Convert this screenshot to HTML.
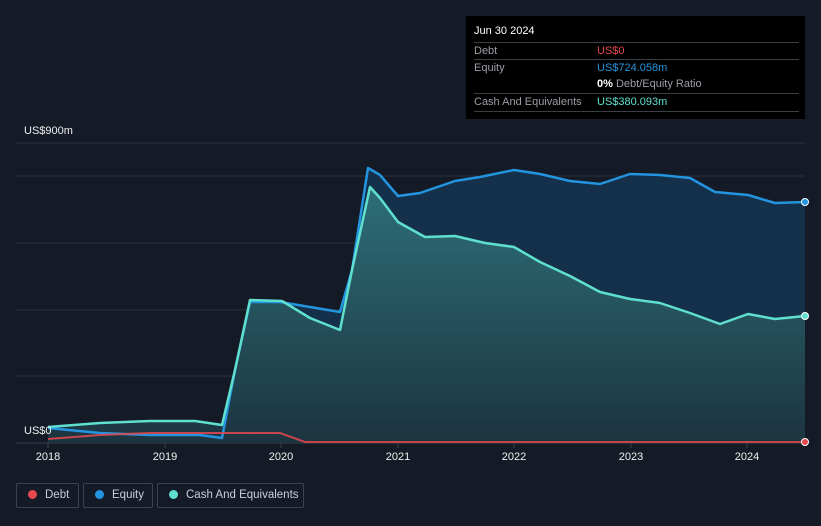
<!DOCTYPE html><html><head><meta charset="utf-8"><style>
body{margin:0;width:821px;height:526px;background:#151b26;font-family:"Liberation Sans",sans-serif;position:relative;overflow:hidden;color:#fff}
.tt{position:absolute;left:466px;top:16px;width:339px;height:103px;background:#000;font-size:11px}
.tt .r{position:absolute;left:8px;right:6px;border-top:1px solid #3a3e45;height:17px;line-height:17px;color:#9a9ea5}
.tt .v{position:absolute;left:123px}
.lg{position:absolute;top:483px;height:25px;border:1px solid #3d434d;border-radius:2px;font-size:11.5px;color:#ccd;line-height:23px;box-sizing:border-box;white-space:nowrap}
.lg i{display:inline-block;width:9px;height:9px;border-radius:50%;margin:0 8px 0 11px;vertical-align:-1px}
.ax{position:absolute;font-size:11px;color:#eee}
</style></head><body>
<div class="tt">
<div style="position:absolute;left:8px;top:9px;font-size:11px;color:#fff">Jun 30 2024</div>
<div class="r" style="top:26px">Debt<span class="v" style="color:#e5484d">US$0</span></div>
<div class="r" style="top:43px">Equity<span class="v" style="color:#2394df">US$724.058m</span></div>
<div class="r" style="top:60px;border-top:none"><span class="v"><b style="color:#fff">0%</b> Debt/Equity Ratio</span></div>
<div class="r" style="top:77px">Cash And Equivalents<span class="v" style="color:#5fe0cf">US$380.093m</span></div>
<div style="position:absolute;left:8px;right:6px;top:95px;border-top:1px solid #3a3e45"></div>
</div>
<div class="ax" style="left:24px;top:125px">US$900m</div>
<svg width="821" height="526" style="position:absolute;left:0;top:0">
<defs><linearGradient id="g" x1="0" y1="0" x2="0" y2="1"><stop offset="0" stop-color="#2d6e78"/><stop offset="1" stop-color="#1c3440"/></linearGradient></defs>
<g stroke="#2a303b" stroke-width="1"><line x1="16" y1="143" x2="805" y2="143"/><line x1="16" y1="176" x2="805" y2="176"/><line x1="16" y1="243" x2="805" y2="243"/><line x1="16" y1="310" x2="805" y2="310"/><line x1="16" y1="376" x2="805" y2="376"/><line x1="16" y1="443" x2="805" y2="443" stroke="#3a404b"/></g>
<polygon fill="#14304a" points="48,428 100,433 150,435 200,435 222,438 235,370 250,302 280,302 310,307 340,312 352,270 368,168 380,175 398,196 420,193 455,181 480,177 514,170 540,174 570,181 600,184 630,174 660,175 690,178 715,192 748,195 775,203 805,202 805,443 48,443"/>
<polygon fill="url(#g)" points="48,427 100,423 150,421 195,421 222,425 235,370 250,300 282,301 310,318 340,330 352,270 370,187 380,198 398,222 425,237 455,236 485,243 514,247 540,262 570,276 600,292 630,299 660,303 690,313 720,324 748,314 775,319 805,316 805,443 48,443"/>
<polyline fill="none" stroke="#2394df" stroke-width="2.5" stroke-linejoin="round" points="48,428 100,433 150,435 200,435 222,438 235,370 250,302 280,302 310,307 340,312 352,270 368,168 380,175 398,196 420,193 455,181 480,177 514,170 540,174 570,181 600,184 630,174 660,175 690,178 715,192 748,195 775,203 805,202"/>
<polyline fill="none" stroke="#5fe0cf" stroke-width="2.5" stroke-linejoin="round" points="48,427 100,423 150,421 195,421 222,425 235,370 250,300 282,301 310,318 340,330 352,270 370,187 380,198 398,222 425,237 455,236 485,243 514,247 540,262 570,276 600,292 630,299 660,303 690,313 720,324 748,314 775,319 805,316"/>
<polyline fill="none" stroke="#e5484d" stroke-width="2" stroke-opacity=".85" points="48,439 100,435 150,433 280,433 305,442 805,442"/>
<circle cx="805" cy="202" r="3.5" fill="#2394df" stroke="#fff" stroke-width="1"/>
<circle cx="805" cy="316" r="3.5" fill="#5fe0cf" stroke="#fff" stroke-width="1"/>
<circle cx="805" cy="442" r="3.5" fill="#e5484d" stroke="#fff" stroke-width="1"/>
<g stroke="#3a404b"><line x1="48" y1="443" x2="48" y2="448"/><line x1="165" y1="443" x2="165" y2="448"/><line x1="281" y1="443" x2="281" y2="448"/><line x1="398" y1="443" x2="398" y2="448"/><line x1="514" y1="443" x2="514" y2="448"/><line x1="631" y1="443" x2="631" y2="448"/><line x1="747" y1="443" x2="747" y2="448"/></g>
<g fill="#eee" font-size="11" text-anchor="middle" font-family="Liberation Sans"><text x="48" y="460">2018</text><text x="165" y="460">2019</text><text x="281" y="460">2020</text><text x="398" y="460">2021</text><text x="514" y="460">2022</text><text x="631" y="460">2023</text><text x="747" y="460">2024</text></g>
</svg>
<div class="ax" style="left:24px;top:425px">US$0</div>
<div class="lg" style="left:16px;width:63px"><i style="background:#e5484d"></i>Debt</div>
<div class="lg" style="left:83px;width:70px"><i style="background:#2394df"></i>Equity</div>
<div class="lg" style="left:157px;width:147px"><i style="background:#5fe0cf"></i>Cash And Equivalents</div>
</body></html>
